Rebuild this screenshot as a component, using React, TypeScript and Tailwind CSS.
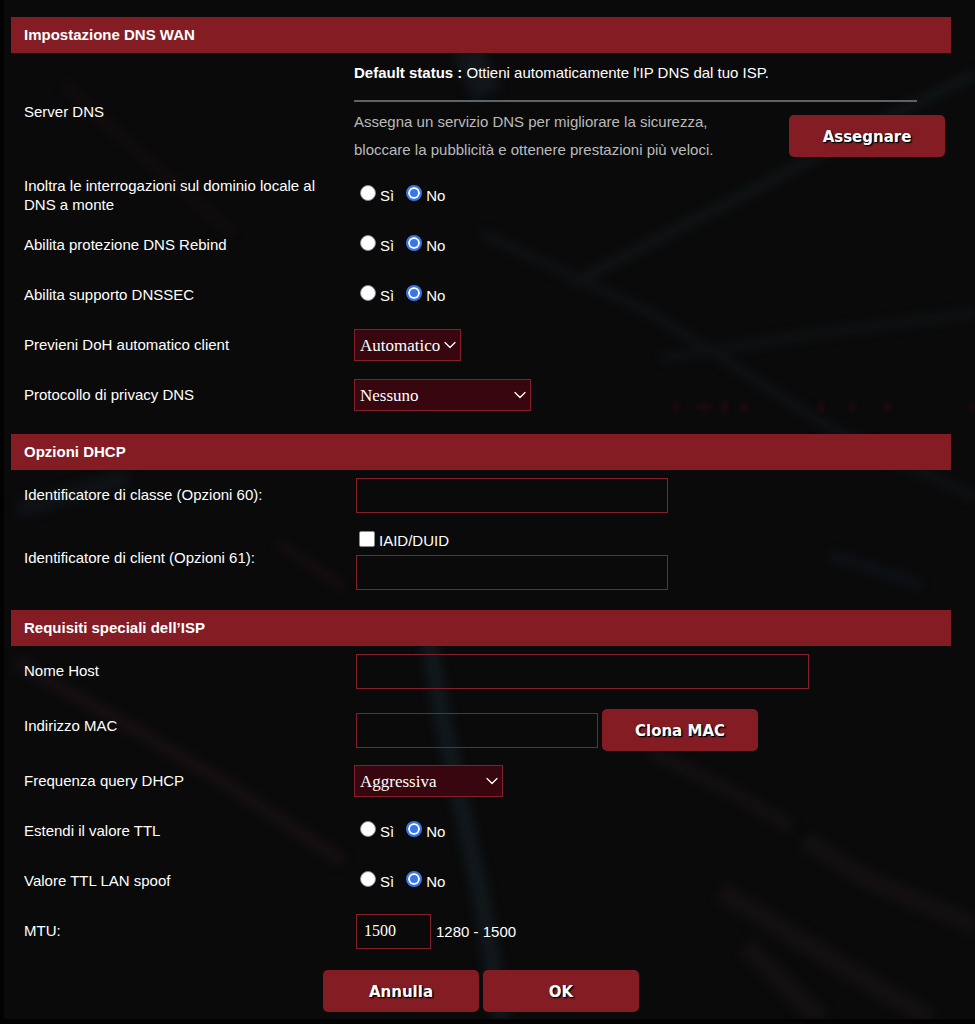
import { useState } from "react";
import type { ReactNode } from "react";
import { ChevronDown } from "lucide-react";

const campo =
  "h-[35px] max-w-full border border-[#84202a] bg-transparent px-[7px] font-['Liberation_Serif','Times_New_Roman',serif] text-base text-white outline-none focus:border-[#c0303e]";

function Sezione({ titolo, children }: { titolo: string; children: ReactNode }) {
  return (
    <section>
      <h2 className="h-9 bg-[#841c24] px-[13px] text-[15px] leading-9 font-bold">{titolo}</h2>
      {children}
    </section>
  );
}

function Riga({
  label,
  htmlFor,
  altezza = "min-h-[50px]",
  children,
}: {
  label: string;
  htmlFor?: string;
  altezza?: string;
  children: ReactNode;
}) {
  return (
    <div className={`grid grid-cols-[343px_1fr] items-center ${altezza}`}>
      {htmlFor ? (
        <label htmlFor={htmlFor} className="pr-4 pb-px pl-[13px]">{label}</label>
      ) : (
        <span className="pr-4 pb-px pl-[13px]">{label}</span>
      )}
      <div className="min-w-0">{children}</div>
    </div>
  );
}

function SiNo({ nome, label }: { nome: string; label: string }) {
  const [valore, setValore] = useState("no");

  return (
    <Riga label={label}>
      <div role="radiogroup" aria-label={label} className="flex gap-3 pl-1.5">
        {[
          { id: "si", testo: "Sì" },
          { id: "no", testo: "No" },
        ].map(op => (
          <label key={op.id} className="flex items-end gap-1">
            <input
              type="radio"
              name={nome}
              value={op.id}
              checked={valore === op.id}
              onChange={() => setValore(op.id)}
              className="mb-1 size-4 appearance-none rounded-full border border-[#8a8a8a] bg-white checked:border-2 checked:border-[#3a76e8] checked:bg-[#3a76e8] checked:shadow-[inset_0_0_0_2px_white]"
            />
            {op.testo}
          </label>
        ))}
      </div>
    </Riga>
  );
}

function Scelta({ id, larghezza, opzioni }: { id: string; larghezza: string; opzioni: string[] }) {
  return (
    <div className={`relative ${larghezza}`}>
      <select
        id={id}
        className="block h-8 w-full appearance-none border border-[#84202a] bg-[#38060e] pr-5 pl-[5px] font-['Liberation_Serif','Times_New_Roman',serif] text-[17px] text-white outline-none"
      >
        {opzioni.map(o => (
          <option key={o}>{o}</option>
        ))}
      </select>
      <ChevronDown className="pointer-events-none absolute top-1.5 right-px size-5" strokeWidth={1.5} />
    </div>
  );
}

function Pulsante({ children }: { children: ReactNode }) {
  return (
    <button
      type="button"
      className="h-[42px] w-[156px] shrink-0 rounded-[5px] bg-[#841c24] pt-0.5 font-['DejaVu_Sans',Verdana,sans-serif] text-[15px] font-bold [text-shadow:1px_1px_0_black,1px_1px_2px_black] hover:bg-[#9c222c]"
    >
      {children}
    </button>
  );
}

function Sfondo() {
  return (
    <svg
      aria-hidden="true"
      className="absolute inset-0 h-full w-full"
      viewBox="0 0 975 1024"
      preserveAspectRatio="xMidYMid slice"
      fill="none"
    >
      <defs>
        <filter id="sfuma" x="-20%" y="-20%" width="140%" height="140%" colorInterpolationFilters="sRGB">
          <feGaussianBlur stdDeviation="5" />
        </filter>
        <filter id="sfuma-poco" x="-20%" y="-200%" width="140%" height="500%" colorInterpolationFilters="sRGB">
          <feGaussianBlur stdDeviation="2" />
        </filter>
      </defs>
      <g filter="url(#sfuma)">
        <path d="M426 640L440 720L458 805L478 895L500 1024" stroke="#11181b" strokeWidth="17" />
        <path d="M465 50L485 95" stroke="#11161a" strokeWidth="30" />
        <path d="M975 75L900 112L770 182L570 285" stroke="#111617" strokeWidth="9" />
        <path d="M480 235L650 315L830 430L975 500" stroke="#0f1214" strokeWidth="9" />
        <path d="M660 360L820 335L975 315" stroke="#0f1314" strokeWidth="8" />
        <path d="M12 665L100 715L220 785L340 865" stroke="#161012" strokeWidth="13" />
        <path d="M60 85L120 140L230 235" stroke="#140d0e" strokeWidth="9" />
        <path d="M275 545L340 590" stroke="#160e0f" strokeWidth="9" />
        <path d="M15 512L125 480" stroke="#0f1317" strokeWidth="16" />
        <path d="M650 755L730 795L790 830" stroke="#141012" strokeWidth="13" />
        <path d="M805 845L870 885L975 930" stroke="#141012" strokeWidth="18" />
        <path d="M720 895L800 945L930 1024M745 950L820 1024" stroke="#141012" strokeWidth="20" />
        <path d="M830 558L920 588" stroke="#0e1317" strokeWidth="10" />
      </g>
      <g filter="url(#sfuma-poco)" fill="#1e0a0d">
        <rect x="672" y="404" width="6" height="10" />
        <rect x="696" y="406" width="14" height="6" />
        <rect x="720" y="404" width="7" height="11" />
        <rect x="740" y="404" width="6" height="10" />
        <rect x="817" y="404" width="6" height="10" />
        <rect x="849" y="405" width="6" height="8" />
        <rect x="883" y="404" width="7" height="10" />
        <rect x="969" y="405" width="6" height="8" />
      </g>
    </svg>
  );
}

export default function App() {
  return (
    <div className="min-h-screen bg-[#020204] pb-[5px] pl-1 font-['Liberation_Sans',Arial,sans-serif] text-[15px] leading-[19px] text-white">
      <div className="relative overflow-hidden bg-[#0a0a0b] pt-[17px] pr-6 pb-[7px] pl-[7px]">
        <Sfondo />
        <form className="relative flex flex-col gap-3.5" onSubmit={e => e.preventDefault()}>
          <Sezione titolo="Impostazione DNS WAN">
            <Riga label="Server DNS" altezza="min-h-[117px]">
              <p className="pt-1">
                <strong>Default status :</strong> Ottieni automaticamente l'IP DNS dal tuo ISP.
              </p>
              <hr className="mt-[18px] mr-[34px] mb-1.5 border-t-2 border-[#5b6466]" />
              <div className="flex items-center justify-between pr-1.5">
                <p className="max-w-[400px] leading-7 text-[#bababa]">
                  Assegna un servizio DNS per migliorare la sicurezza, bloccare la pubblicità e ottenere prestazioni più veloci.
                </p>
                <Pulsante>Assegnare</Pulsante>
              </div>
            </Riga>
            <SiNo nome="inoltra" label="Inoltra le interrogazioni sul dominio locale al DNS a monte" />
            <SiNo nome="rebind" label="Abilita protezione DNS Rebind" />
            <SiNo nome="dnssec" label="Abilita supporto DNSSEC" />
            <Riga label="Previeni DoH automatico client" htmlFor="doh">
              <Scelta id="doh" larghezza="w-[107px]" opzioni={["Automatico", "Sì", "No"]} />
            </Riga>
            <Riga label="Protocollo di privacy DNS" htmlFor="privacy">
              <Scelta id="privacy" larghezza="w-[177px]" opzioni={["Nessuno", "DNS-over-TLS (DoT)"]} />
            </Riga>
          </Sezione>

          <Sezione titolo="Opzioni DHCP">
            <Riga label="Identificatore di classe (Opzioni 60):" htmlFor="classe">
              <input id="classe" type="text" className={`${campo} ml-0.5 block w-[312px]`} />
            </Riga>
            <Riga label="Identificatore di client (Opzioni 61):" htmlFor="client" altezza="min-h-[76px]">
              <div className="ml-0.5 pt-1">
                <label className="mb-[5px] flex items-end gap-1 pl-[3px]">
                  <input
                    type="checkbox"
                    className="mb-[3px] size-4 appearance-none rounded-[2px] border border-[#8a8a8a] bg-white checked:border-[#3a76e8] checked:bg-[#3a76e8]"
                  />
                  IAID/DUID
                </label>
                <input id="client" type="text" className={`${campo} block w-[312px]`} />
              </div>
            </Riga>
          </Sezione>

          <Sezione titolo="Requisiti speciali dell’ISP">
            <Riga label="Nome Host" htmlFor="host">
              <input id="host" type="text" className={`${campo} ml-0.5 block w-[453px]`} />
            </Riga>
            <Riga label="Indirizzo MAC" htmlFor="mac" altezza="min-h-[60px]">
              <div className="ml-0.5 flex items-center gap-1 pt-2">
                <input id="mac" type="text" className={`${campo} w-[242px]`} />
                <Pulsante>Clona MAC</Pulsante>
              </div>
            </Riga>
            <Riga label="Frequenza query DHCP" htmlFor="frequenza">
              <Scelta id="frequenza" larghezza="w-[149px]" opzioni={["Aggressiva", "Normale", "Continua"]} />
            </Riga>
            <SiNo nome="ttl" label="Estendi il valore TTL" />
            <SiNo nome="spoof" label="Valore TTL LAN spoof" />
            <Riga label="MTU:" htmlFor="mtu">
              <div className="ml-0.5 flex items-center gap-[5px]">
                <input id="mtu" type="text" defaultValue="1500" className={`${campo} w-[75px]`} />
                <span>1280 - 1500</span>
              </div>
            </Riga>
          </Sezione>

          <div className="flex justify-center gap-1">
            <Pulsante>Annulla</Pulsante>
            <Pulsante>OK</Pulsante>
          </div>
        </form>
      </div>
    </div>
  );
}
